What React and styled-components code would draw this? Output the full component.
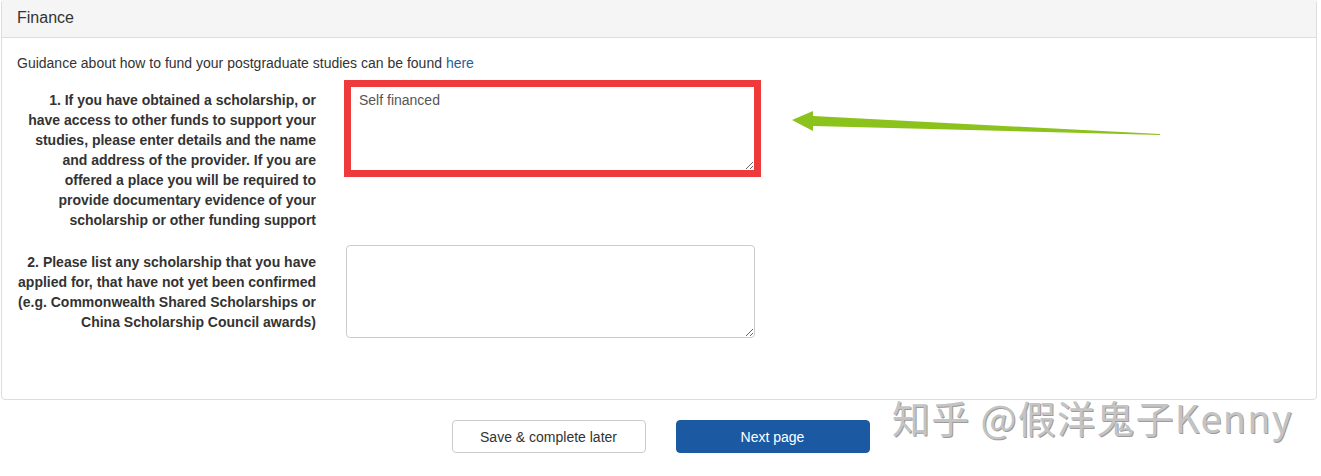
import React from "react";
import styled, { createGlobalStyle } from "styled-components";

const GlobalStyle = createGlobalStyle`
  body {
    margin: 0;
    background: #fff;
    font-family: "Liberation Sans", Arial, sans-serif;
    color: #333;
  }
`;

const Page = styled.div`
  position: relative;
  width: 1321px;
  height: 476px;
  overflow: hidden;
`;

const Panel = styled.section`
  margin: -1px 4px 0 1px;
  border: 1px solid #ddd;
  border-radius: 4px;
  background: #fff;
`;

const PanelHeading = styled.div`
  background: #f5f5f5;
  border-bottom: 1px solid #ddd;
  padding: 9px 15px 10px;
  font-size: 16px;
  line-height: 18px;
  color: #333;
`;

const PanelBody = styled.div`
  padding: 15px 15px 46px;
`;

const Guidance = styled.p`
  margin: 0 0 10px;
  font-size: 14px;
  line-height: 20px;
`;

const Link = styled.a`
  color: #1f5f9c;
  text-decoration: none;
`;

const FormRow = styled.div`
  display: grid;
  grid-template-columns: 299px 409px;
  column-gap: 30px;
  align-items: start;
  margin-bottom: 15px;
`;

const Label = styled.label`
  padding-top: 7px;
  text-align: right;
  font-weight: bold;
  font-size: 14px;
  line-height: 20px;
  color: #333;
`;

const TextArea = styled.textarea`
  box-sizing: border-box;
  width: ${(p) => (p.$highlight ? "417px" : "409px")};
  height: ${(p) => (p.$highlight ? "97px" : "93px")};
  margin: ${(p) => (p.$highlight ? "-3px -6px -3px -2px" : "0")};
  padding: ${(p) => (p.$highlight ? "3px 8px" : "6px 12px")};
  border: ${(p) => (p.$highlight ? "7px solid #ee3a3a" : "1px solid #ccc")};
  border-radius: ${(p) => (p.$highlight ? "0" : "4px")};
  font-family: "Liberation Sans", Arial, sans-serif;
  font-size: 14px;
  line-height: 20px;
  color: #555;
  resize: vertical;
  outline: none;
`;

const Actions = styled.div`
  display: flex;
  justify-content: center;
  gap: 30px;
  margin-top: 20px;
`;

const Button = styled.button`
  box-sizing: border-box;
  width: 194px;
  height: 33px;
  border-radius: 4px;
  font-family: "Liberation Sans", Arial, sans-serif;
  font-size: 14px;
  border: 1px solid ${(p) => (p.$primary ? "#1b5aa3" : "#ccc")};
  background: ${(p) => (p.$primary ? "#1b5aa3" : "#fff")};
  color: ${(p) => (p.$primary ? "#fff" : "#333")};
  cursor: pointer;
`;

const Arrow = styled.svg`
  position: absolute;
  left: 780px;
  top: 100px;
`;

const Watermark = styled.div`
  position: absolute;
  left: 892px;
  top: 392px;
  font-family: "Noto Sans CJK SC", "Liberation Sans", sans-serif;
  font-size: 38px;
  line-height: 50px;
  color: #c4c4c4;
  text-shadow: 1px 1px 0 #9c9c9c;
  letter-spacing: 1.3px;
  pointer-events: none;
  white-space: nowrap;
`;

export default function App() {
  return (
    <Page>
      <GlobalStyle />
      <Panel>
        <PanelHeading>Finance</PanelHeading>
        <PanelBody>
          <Guidance>
            Guidance about how to fund your postgraduate studies can be found{" "}
            <Link href="#">here</Link>
          </Guidance>
          <FormRow>
            <Label>
              1. If you have obtained a scholarship, or have access to other
              funds to support your studies, please enter details and the name
              and address of the provider. If you are offered a place you will
              be required to provide documentary evidence of your scholarship
              or other funding support
            </Label>
            <TextArea $highlight defaultValue="Self financed" />
          </FormRow>
          <FormRow>
            <Label>
              2. Please list any scholarship that you have applied for, that
              have not yet been confirmed (e.g. Commonwealth Shared
              Scholarships or China Scholarship Council awards)
            </Label>
            <TextArea />
          </FormRow>
        </PanelBody>
      </Panel>
      <Actions>
        <Button>Save &amp; complete later</Button>
        <Button $primary>Next page</Button>
      </Actions>
      <Arrow width="400" height="50" viewBox="0 0 400 50">
        <polygon
          points="12,20 33,11 33,16 380,34 380,35 33,26 33,31"
          fill="#8cc21c"
        />
      </Arrow>
      <Watermark>知乎 @假洋鬼子Kenny</Watermark>
    </Page>
  );
}
